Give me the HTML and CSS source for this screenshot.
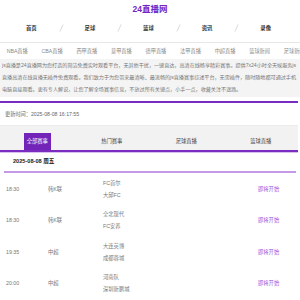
FILE: index.html
```html
<!DOCTYPE html>
<html lang="zh-CN">
<head>
<meta charset="utf-8">
<title>24直播网</title>
<link rel="stylesheet" href="styles.css">
</head>
<body>
<header class="header">
  <div class="title">24直播网</div>
  <nav class="nav">
    <a class="nav-item">首页</a>
    <a class="nav-item">足球</a>
    <a class="nav-item">篮球</a>
    <a class="nav-item">资讯</a>
    <a class="nav-item">录像</a>
  </nav>
</header>
<div class="subnav">
  <a>NBA直播</a><a>CBA直播</a><a>西甲直播</a><a>意甲直播</a><a>德甲直播</a><a>法甲直播</a><a>中超直播</a><a>篮球新闻</a><a>足球新闻</a>
</div>
<p class="intro">js直播是24直播网为您打造的简洁免费实时观看平台，无其他干扰，一键直达，高清在线畅享精彩赛事。提供7x24小时全天候服务js直播高清在线直播无插件免费观看。我们致力于为您带来最清晰、最流畅的js直播赛事综述平台，无需插件，随时随地都可通过手机电脑直接观看。更有专人解说，让您了解全场赛事信息，不放过所有关键点，小手一点，收藏关注不迷路。</p>
<section class="panel">
  <div class="update">更新时间：2025-08-08 16:17:55</div>
  <div class="tabs">
    <div class="tab"><span class="tab-label active">全部赛事</span></div>
    <div class="tab"><span class="tab-label">热门赛事</span></div>
    <div class="tab"><span class="tab-label">足球直播</span></div>
    <div class="tab"><span class="tab-label">篮球直播</span></div>
  </div>
  <div class="date">2025-08-08 周五</div>
  <div class="match">
    <span class="time">18:30</span><span class="league">韩K联</span>
    <span class="teams"><span>FC首尔</span><span>大邱FC</span></span>
    <span class="status">即将开始</span>
  </div>
  <div class="match">
    <span class="time">18:30</span><span class="league">韩K联</span>
    <span class="teams"><span>全北现代</span><span>FC安养</span></span>
    <span class="status">即将开始</span>
  </div>
  <div class="match">
    <span class="time">19:35</span><span class="league">中超</span>
    <span class="teams"><span>大连英博</span><span>成都蓉城</span></span>
    <span class="status">即将开始</span>
  </div>
  <div class="match">
    <span class="time">20:00</span><span class="league">中超</span>
    <span class="teams"><span>河南队</span><span>深圳新鹏城</span></span>
    <span class="status">即将开始</span>
  </div>
</section>
</body>
</html>
```
FILE: styles.css
```css
* { box-sizing: border-box; }
html, body { margin: 0; padding: 0; background: #fff; }
body {
  font-family: "Liberation Sans", "Noto Sans CJK SC", sans-serif;
  color: #666;
  overflow: hidden;
}
a { text-decoration: none; color: inherit; }

.header {
  border-bottom: 1px solid #e8e8e8;
  padding-bottom: 5px;
}
.title {
  height: 19px;
  line-height: 19px;
  text-align: center;
  font-size: 8.5px;
  font-weight: bold;
  color: #7324c4;
}
.nav {
  display: flex;
  height: 18px;
  padding: 0 5px 0 2px;
}
.nav-item {
  flex: 1;
  position: relative;
  text-align: center;
  line-height: 18px;
  font-size: 5.4px;
  font-weight: bold;
  color: #333;
}
.nav-item + .nav-item::before {
  content: "";
  position: absolute;
  left: 0;
  top: 5px;
  width: 1px;
  height: 8px;
  background: #dcdcdc;
  transform: rotate(25deg);
}

.subnav {
  display: flex;
  gap: 13.8px;
  height: 16px;
  line-height: 16px;
  padding-left: 6.7px;
  white-space: nowrap;
  overflow: hidden;
  font-size: 5.2px;
  color: #888;
}
.subnav a { flex: none; }

.intro {
  margin: 0 0 4px;
  padding: 0 2px 2px;
  background: #f4f4f4;
  font-size: 5.1px;
  line-height: 12px;
  color: #777;
}

.panel {
  margin-right: 2px;
  border-top: 2px solid #7a2cc0;
}
.update {
  height: 22px;
  line-height: 22px;
  padding-left: 5px;
  font-size: 5.2px;
  color: #666;
}
.tabs {
  display: flex;
  align-items: flex-end;
  height: 27px;
  background: #f2f2f2;
  border-top: 1px solid #ebebeb;
  border-bottom: 2px solid #7a2cc0;
  box-shadow: 0 1px 0 #d8c0ee;
}
.tab {
  flex: 1;
  text-align: center;
}
.tab-label {
  display: inline-block;
  height: 17px;
  line-height: 17px;
  padding: 0 3px;
  font-size: 5.3px;
  color: #444;
}
.tab-label.active {
  background: #7324b8;
  color: #fff;
}

.date {
  margin: 0 2px 0 4px;
  height: 21px;
  line-height: 19px;
  padding-left: 9px;
  border-bottom: 2px solid #c49ae8;
  font-size: 5.6px;
  font-weight: bold;
  color: #222;
}

.match {
  display: grid;
  grid-template-columns: 42px 55px 1fr 40px;
  align-items: center;
  height: 31.5px;
  padding-left: 6px;
  font-size: 5.3px;
  color: #777;
}
.teams {
  display: flex;
  flex-direction: column;
  line-height: 12px;
}
.status {
  color: #9a55da;
}
```
